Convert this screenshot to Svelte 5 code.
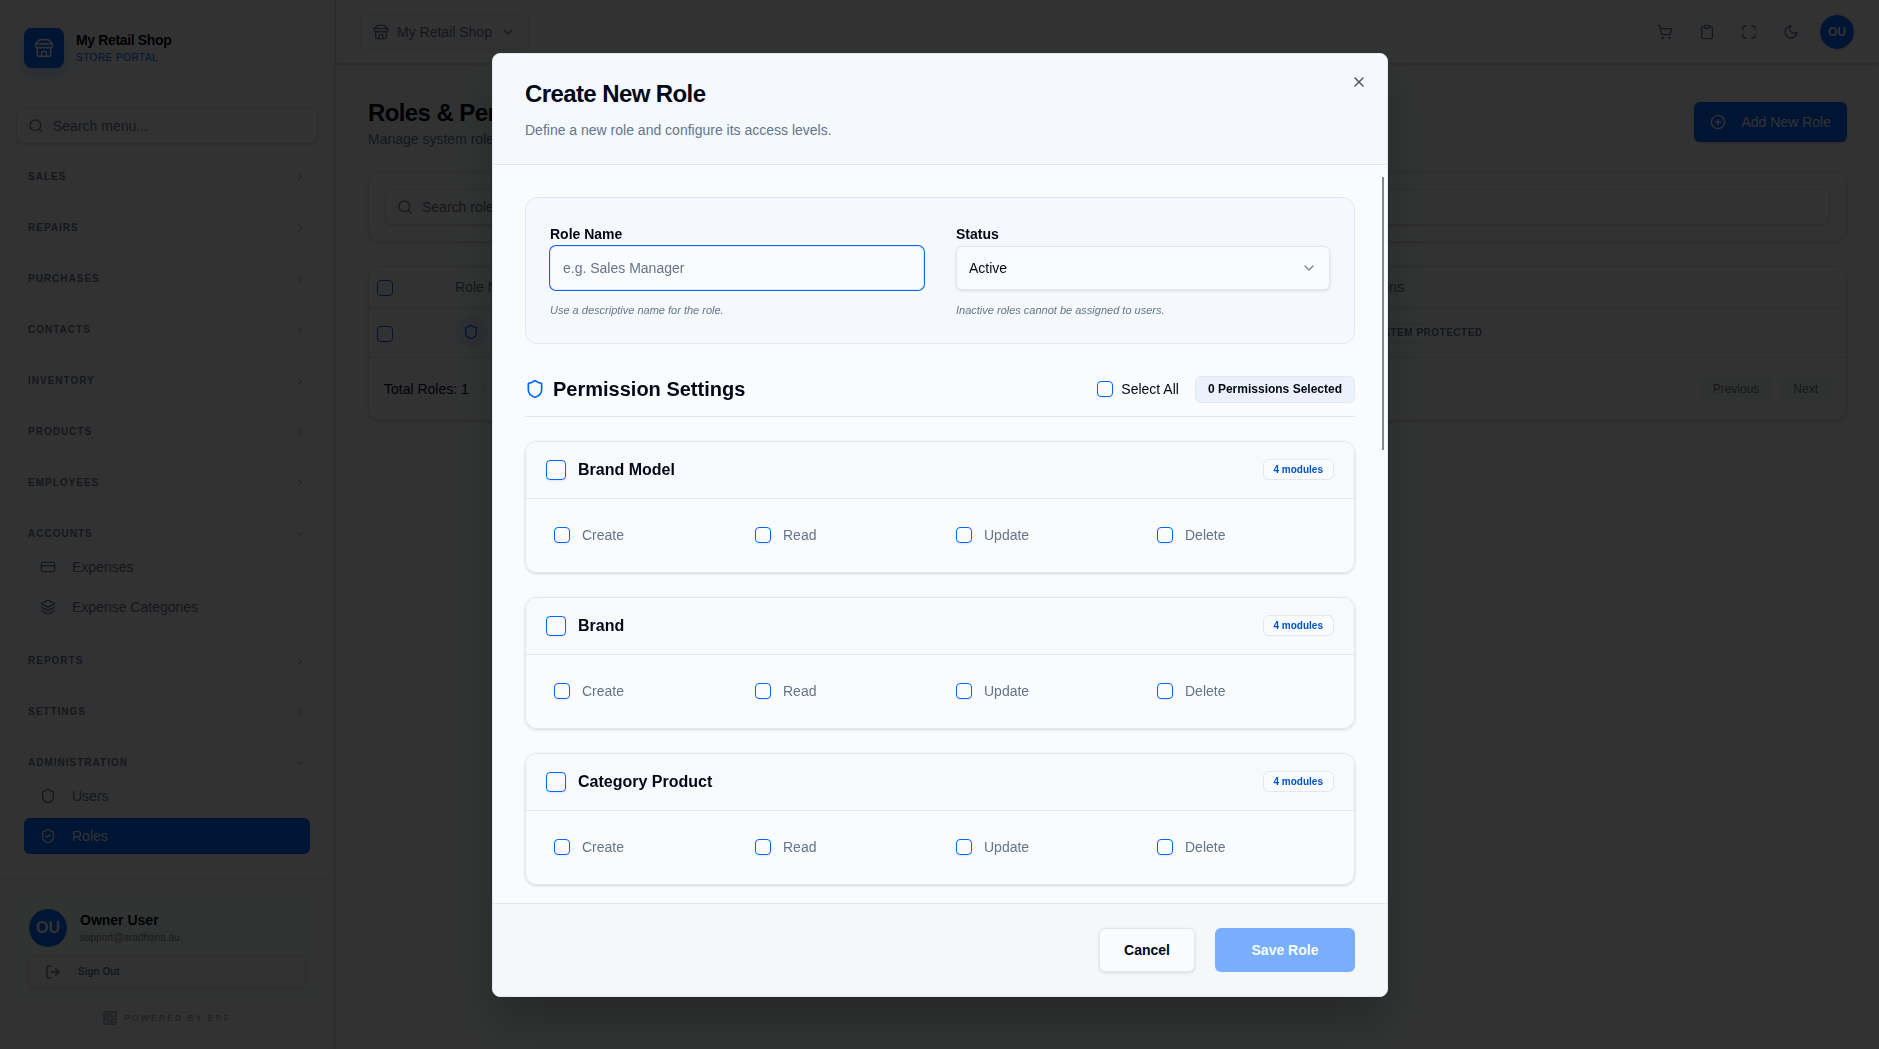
<script>
  const icons = {
    store: [
      'm2 7 4.41-4.41A2 2 0 0 1 7.83 2h8.34a2 2 0 0 1 1.42.59L22 7',
      'M4 12v8a2 2 0 0 0 2 2h12a2 2 0 0 0 2-2v-8',
      'M15 22v-4a2 2 0 0 0-2-2h-2a2 2 0 0 0-2 2v4',
      'M2 7h20',
      'M22 7v3a2 2 0 0 1-2 2 2.7 2.7 0 0 1-1.59-.63.7.7 0 0 0-.82 0A2.7 2.7 0 0 1 16 12a2.7 2.7 0 0 1-1.59-.63.7.7 0 0 0-.82 0A2.7 2.7 0 0 1 12 12a2.7 2.7 0 0 1-1.59-.63.7.7 0 0 0-.82 0A2.7 2.7 0 0 1 8 12a2.7 2.7 0 0 1-1.59-.63.7.7 0 0 0-.82 0A2.7 2.7 0 0 1 4 12a2 2 0 0 1-2-2V7'
    ],
    search: ['M19 11a8 8 0 1 1-16 0 8 8 0 0 1 16 0z', 'm21 21-4.3-4.3'],
    right: ['m9 18 6-6-6-6'],
    down: ['m6 9 6 6 6-6'],
    card: ['M4 5h16a2 2 0 0 1 2 2v10a2 2 0 0 1-2 2H4a2 2 0 0 1-2-2V7a2 2 0 0 1 2-2z', 'M2 10h20'],
    layers: [
      'M12.83 2.18a2 2 0 0 0-1.66 0L2.6 6.08a1 1 0 0 0 0 1.83l8.58 3.91a2 2 0 0 0 1.66 0l8.58-3.9a1 1 0 0 0 0-1.83Z',
      'm22 12.65-9.17 4.16a2 2 0 0 1-1.66 0L2 12.65',
      'm22 17.65-9.17 4.16a2 2 0 0 1-1.66 0L2 17.65'
    ],
    shield: [
      'M20 13c0 5-3.5 7.5-7.66 8.95a1 1 0 0 1-.67-.01C7.5 20.5 4 18 4 13V6a1 1 0 0 1 1-1c2 0 4.5-1.2 6.24-2.72a1.17 1.17 0 0 1 1.52 0C14.51 3.81 17 5 19 5a1 1 0 0 1 1 1z'
    ],
    shieldCheck: [
      'M20 13c0 5-3.5 7.5-7.66 8.95a1 1 0 0 1-.67-.01C7.5 20.5 4 18 4 13V6a1 1 0 0 1 1-1c2 0 4.5-1.2 6.24-2.72a1.17 1.17 0 0 1 1.52 0C14.51 3.81 17 5 19 5a1 1 0 0 1 1 1z',
      'm9 12 2 2 4-4'
    ],
    logout: ['M9 21H5a2 2 0 0 1-2-2V5a2 2 0 0 1 2-2h4', 'm16 17 5-5-5-5', 'M21 12H9'],
    cart: [
      'M9 21a1 1 0 1 1-2 0 1 1 0 0 1 2 0z',
      'M20 21a1 1 0 1 1-2 0 1 1 0 0 1 2 0z',
      'M2.05 2.05h2l2.66 12.42a2 2 0 0 0 2 1.58h9.78a2 2 0 0 0 1.95-1.57l1.65-7.43H5.12'
    ],
    clipboard: [
      'M9 2h6a1 1 0 0 1 1 1v2a1 1 0 0 1-1 1H9a1 1 0 0 1-1-1V3a1 1 0 0 1 1-1z',
      'M16 4h2a2 2 0 0 1 2 2v14a2 2 0 0 1-2 2H6a2 2 0 0 1-2-2V6a2 2 0 0 1 2-2h2'
    ],
    maximize: ['M8 3H5a2 2 0 0 0-2 2v3', 'M21 8V5a2 2 0 0 0-2-2h-3', 'M3 16v3a2 2 0 0 0 2 2h3', 'M16 21h3a2 2 0 0 0 2-2v-3'],
    moon: ['M12 3a6 6 0 0 0 9 9 9 9 0 1 1-9-9Z'],
    plus: ['M22 12a10 10 0 1 1-20 0 10 10 0 0 1 20 0z', 'M8 12h8', 'M12 8v8'],
    close: ['M18 6 6 18', 'm6 6 12 12']
  };

  const sections = [
    { name: 'Sales' },
    { name: 'Repairs' },
    { name: 'Purchases' },
    { name: 'Contacts' },
    { name: 'Inventory' },
    { name: 'Products' },
    { name: 'Employees' },
    {
      name: 'Accounts',
      items: [
        { name: 'Expenses', icon: 'card' },
        { name: 'Expense Categories', icon: 'layers' }
      ]
    },
    { name: 'Reports' },
    { name: 'Settings' },
    {
      name: 'Administration',
      items: [
        { name: 'Users', icon: 'shield' },
        { name: 'Roles', icon: 'shieldCheck', active: true }
      ]
    }
  ];

  const tools = [
    { label: 'Point of sale', icon: 'cart' },
    { label: 'Orders', icon: 'clipboard' },
    { label: 'Full screen', icon: 'maximize' },
    { label: 'Dark mode', icon: 'moon' }
  ];

  const actions = ['Create', 'Read', 'Update', 'Delete'];
  const groups = ['Brand Model', 'Brand', 'Category Product'];

  let open = $state(true);
  let roleName = $state('');
  let status = $state('Active');
  let picked = $state([]);

  let allKeys = groups.flatMap((g) => keysOf(g));
  let allPicked = $derived(picked.length === allKeys.length);

  function keysOf(group) {
    return actions.map((a) => group + ':' + a);
  }

  function groupPicked(group) {
    return keysOf(group).every((k) => picked.includes(k));
  }

  function toggleGroup(group) {
    const keys = keysOf(group);
    const rest = picked.filter((k) => !keys.includes(k));
    picked = groupPicked(group) ? rest : [...rest, ...keys];
  }

  function toggleAll() {
    picked = allPicked ? [] : [...allKeys];
  }
</script>

{#snippet icon(name, size = 16)}
  <svg width={size} height={size} viewBox="0 0 24 24" fill="none" stroke="currentColor" stroke-width="2" stroke-linecap="round" stroke-linejoin="round" aria-hidden="true">
    {#each icons[name] as d}
      <path {d} />
    {/each}
  </svg>
{/snippet}

<div class="app">
  <aside class="sidebar">
    <div class="brand">
      <div class="logo">{@render icon('store', 20)}</div>
      <div>
        <div class="brand-name">My Retail Shop</div>
        <div class="brand-sub">STORE PORTAL</div>
      </div>
    </div>

    <label class="search menu-search">
      {@render icon('search')}
      <input type="text" placeholder="Search menu..." aria-label="Search menu" />
    </label>

    <nav>
      {#each sections as section}
        <section>
          <button class="section-head">
            <span>{section.name}</span>
            {@render icon(section.items ? 'down' : 'right', 12)}
          </button>
          {#if section.items}
            <div class="section-items">
              {#each section.items as item}
                <a href="#{item.name}" class="nav-item" class:active={item.active}>
                  {@render icon(item.icon)}
                  {item.name}
                </a>
              {/each}
            </div>
          {/if}
        </section>
      {/each}
    </nav>

    <div class="side-foot">
      <div class="user-card">
        <div class="user">
          <div class="avatar large">OU</div>
          <div>
            <div class="user-name">Owner User</div>
            <div class="user-mail">support@aradhana.au</div>
          </div>
        </div>
        <button class="sign-out">{@render icon('logout')} Sign Out</button>
      </div>
      <div class="powered">
        <svg width="14" height="14" viewBox="0 0 14 14" fill="currentColor" aria-hidden="true">
          <path d="M0 0h6.500v4.200H2v.6h4.500v1.700H0V3h4.500v-.8H0z" />
          <path fill-rule="evenodd" d="M7.200 0H14v6.500H7.200zM9.500 2v2.700h2.300V2z" />
          <path fill-rule="evenodd" d="M0 7.300h6.500V14H0zM2.200 9.300V12h2.200V9.300z" />
          <path d="M7.200 7.300H14v1.700H9.500v.8H14v1.600H9.500v.8H14V14H7.200z" />
        </svg>
        POWERED BY ERF
      </div>
    </div>
  </aside>

  <div class="main">
    <header class="topbar">
      <button class="shop-picker">
        {@render icon('store')}
        <span>My Retail Shop</span>
        {@render icon('down')}
      </button>
      <div class="tools">
        {#each tools as tool}
          <button class="tool" aria-label={tool.label}>{@render icon(tool.icon)}</button>
        {/each}
        <button class="avatar">OU</button>
      </div>
    </header>

    <main>
      <div class="page-head">
        <div>
          <h1>Roles &amp; Permissions</h1>
          <p>Manage system roles and permissions</p>
        </div>
        <button class="add">{@render icon('plus')} Add New Role</button>
      </div>

      <div class="panel filter">
        <label class="search">
          {@render icon('search')}
          <input type="text" placeholder="Search roles..." aria-label="Search roles" />
        </label>
      </div>

      <div class="panel">
        <table>
          <thead>
            <tr>
              <th class="tick"><input type="checkbox" aria-label="Select all roles" /></th>
              <th>Role Name</th>
              <th class="actions">Actions</th>
            </tr>
          </thead>
          <tbody>
            <tr>
              <td class="tick"><input type="checkbox" aria-label="Select role" /></td>
              <td><div class="role-icon">{@render icon('shield')}</div></td>
              <td class="actions"><span class="protected">SYSTEM PROTECTED</span></td>
            </tr>
          </tbody>
        </table>
        <div class="pager">
          <span class="total">Total Roles: 1</span>
          <div class="pages">
            <button>Previous</button>
            <button>Next</button>
          </div>
        </div>
      </div>
    </main>
  </div>
</div>

{#if open}
  <div class="overlay">
    <div class="modal" role="dialog" aria-modal="true" aria-labelledby="modal-title">
      <div class="modal-head">
        <h2 id="modal-title">Create New Role</h2>
        <p>Define a new role and configure its access levels.</p>
        <button class="close" aria-label="Close" onclick={() => (open = false)}>{@render icon('close')}</button>
      </div>

      <div class="modal-mid">
        <div class="modal-body">
          <div class="fields">
            <div class="field">
              <label for="role-name">Role Name</label>
              <input id="role-name" class="control current" type="text" placeholder="e.g. Sales Manager" bind:value={roleName} />
              <p class="hint">Use a descriptive name for the role.</p>
            </div>
            <div class="field">
              <label for="status">Status</label>
              <div class="select">
                <select id="status" class="control" bind:value={status}>
                  <option>Active</option>
                  <option>Inactive</option>
                </select>
                {@render icon('down')}
              </div>
              <p class="hint">Inactive roles cannot be assigned to users.</p>
            </div>
          </div>

          <div class="perm-head">
            <h3>{@render icon('shield', 20)} Permission Settings</h3>
            <div class="perm-tools">
              <label class="select-all">
                <input type="checkbox" checked={allPicked} onchange={toggleAll} />
                Select All
              </label>
              <span class="count">{picked.length} Permissions Selected</span>
            </div>
          </div>

          <div class="groups">
            {#each groups as group}
              <div class="group">
                <div class="group-head">
                  <label>
                    <input class="big" type="checkbox" checked={groupPicked(group)} onchange={() => toggleGroup(group)} />
                    {group}
                  </label>
                  <span class="modules">{actions.length} modules</span>
                </div>
                <div class="group-body">
                  {#each actions as action}
                    <label>
                      <input type="checkbox" value="{group}:{action}" bind:group={picked} />
                      {action}
                    </label>
                  {/each}
                </div>
              </div>
            {/each}
          </div>
        </div>
        <div class="scroll-thumb"></div>
      </div>

      <div class="modal-foot">
        <button class="cancel" onclick={() => (open = false)}>Cancel</button>
        <button class="save" disabled={!roleName}>Save Role</button>
      </div>
    </div>
  </div>
{/if}

<style>
  :global(body) {
    font-family: "Liberation Sans", Arial, sans-serif;
    font-size: 14px;
    line-height: 20px;
    color: #020817;
    background: #fafbfc;
    overflow: hidden;
  }

  :global(*) {
    box-sizing: border-box;
  }

  button,
  input,
  select {
    font: inherit;
    color: inherit;
    margin: 0;
  }

  button {
    padding: 0;
    border: 0;
    background: none;
    cursor: pointer;
  }

  h1,
  h2,
  h3,
  p {
    margin: 0;
  }

  svg {
    flex: none;
    display: block;
  }

  input::placeholder {
    color: #64748b;
    opacity: 1;
  }

  input[type="checkbox"] {
    appearance: none;
    flex: none;
    display: block;
    width: 16px;
    height: 16px;
    border: 1px solid #0066ff;
    border-radius: 4px;
    box-shadow: 0 1px 2px rgba(0, 0, 0, 0.08);
  }

  input[type="checkbox"]:checked {
    background: #0066ff;
  }

  input[type="checkbox"].big {
    width: 20px;
    height: 20px;
  }

  .app {
    display: flex;
    gap: 1px;
    height: 100vh;
  }

  /* sidebar */
  .sidebar {
    display: flex;
    flex-direction: column;
    flex: none;
    width: 335px;
    border-right: 1px solid #dbe2e9;
    box-shadow: 1px 0 2px rgba(0, 0, 0, 0.15);
  }

  .brand {
    display: flex;
    align-items: center;
    gap: 12px;
    padding: 28px 24px 40px;
  }

  .logo {
    display: grid;
    place-items: center;
    width: 40px;
    height: 40px;
    border-radius: 8px;
    color: #f8fafc;
    background: #0066ff;
    box-shadow: 0 8px 14px rgba(0, 102, 255, 0.2);
  }

  .brand-name {
    font-weight: 700;
    letter-spacing: -0.025em;
  }

  .brand-sub {
    font-size: 10px;
    line-height: 16px;
    letter-spacing: 0.05em;
    color: #0066ff;
  }

  .search {
    display: flex;
    align-items: center;
    gap: 9px;
    height: 36px;
    padding: 0 11px;
    border: 1px solid #dbe2e9;
    border-radius: 6px;
    color: #64748b;
    box-shadow: 0 1px 2px rgba(0, 0, 0, 0.12);
  }

  .search input {
    flex: 1;
    min-width: 0;
    padding: 0;
    border: 0;
    outline: 0;
    background: none;
  }

  .menu-search {
    margin: 0 16px 17px;
  }

  nav {
    display: flex;
    flex-direction: column;
    flex: 1;
    gap: 20px;
    min-height: 0;
    padding: 0 24px;
    overflow: hidden;
  }

  .section-head {
    display: flex;
    align-items: center;
    justify-content: space-between;
    width: 100%;
    height: 31px;
    padding: 0 4px;
    font-size: 10px;
    font-weight: 700;
    letter-spacing: 0.1em;
    text-transform: uppercase;
    color: #64748b;
  }

  .section-head svg {
    opacity: 0.7;
  }

  .section-items {
    display: flex;
    flex-direction: column;
    gap: 4px;
  }

  .nav-item {
    display: flex;
    align-items: center;
    gap: 16px;
    height: 36px;
    padding: 0 16px;
    border-radius: 6px;
    color: #64748b;
    text-decoration: none;
  }

  .nav-item.active {
    color: #f8fafc;
    background: #0066ff;
  }

  .side-foot {
    padding: 17px 16px 15px;
    border-top: 1px solid #dbe2e9;
  }

  .user-card {
    display: flex;
    flex-direction: column;
    gap: 8px;
    padding: 12px;
    border-radius: 12px;
    background: #f6f7f9;
  }

  .user {
    display: flex;
    align-items: center;
    gap: 12px;
  }

  .avatar {
    display: grid;
    place-items: center;
    width: 36px;
    height: 36px;
    border: 1px solid #d6e4fa;
    border-radius: 50%;
    font-size: 12px;
    font-weight: 700;
    color: #f8fafc;
    background: #0066ff;
    background-clip: padding-box;
  }

  .avatar.large {
    width: 40px;
    height: 40px;
    font-size: 16px;
  }

  .user-name {
    font-weight: 700;
  }

  .user-mail {
    font-size: 10px;
    line-height: 16px;
    color: #7c899c;
  }

  .sign-out {
    display: flex;
    align-items: center;
    gap: 17px;
    height: 32px;
    padding: 0 16px;
    border: 1px solid #e2e6ea;
    border-radius: 6px;
    font-size: 10px;
    font-weight: 700;
    color: #64748b;
    background: #fafbfc;
    box-shadow: 0 1px 2px rgba(0, 0, 0, 0.1);
  }

  .powered {
    display: flex;
    align-items: center;
    justify-content: center;
    gap: 7px;
    padding: 8px 0 6px;
    font-size: 9px;
    font-weight: 700;
    letter-spacing: 0.2em;
    color: #a9b1b9;
  }

  /* page */
  .main {
    flex: 1;
    min-width: 0;
  }

  .topbar {
    display: flex;
    align-items: center;
    justify-content: space-between;
    height: 64px;
    padding: 0 24px;
    border-bottom: 1px solid #dbe2e9;
    box-shadow: 0 1px 2px rgba(0, 0, 0, 0.15);
  }

  .shop-picker {
    display: flex;
    align-items: center;
    gap: 8px;
    height: 36px;
    padding: 0 12px;
    border: 1px solid #e2e6ea;
    border-radius: 6px;
    color: #64748b;
  }

  .tools {
    display: flex;
    align-items: center;
    gap: 6px;
    color: #64748b;
  }

  .tool {
    display: grid;
    place-items: center;
    width: 36px;
    height: 36px;
  }

  .tools .avatar {
    margin-left: 4px;
  }

  main {
    display: flex;
    flex-direction: column;
    gap: 24px;
    padding: 32px;
  }

  .page-head {
    display: flex;
    align-items: center;
    justify-content: space-between;
    height: 52px;
  }

  h1 {
    font-size: 24px;
    line-height: 34px;
    letter-spacing: -0.025em;
  }

  .page-head p {
    line-height: 18px;
    color: #64748b;
  }

  .add {
    display: flex;
    align-items: center;
    gap: 16px;
    height: 40px;
    padding: 0 16px;
    border-radius: 6px;
    color: #f8fafc;
    background: #0066ff;
    box-shadow: 0 1px 3px rgba(0, 0, 0, 0.2);
  }

  .panel {
    border: 1px solid #dbe2e9;
    border-radius: 12px;
    box-shadow: 0 1px 3px rgba(0, 0, 0, 0.15);
  }

  .filter {
    padding: 16px;
  }

  table {
    width: 100%;
    border-collapse: collapse;
  }

  tr {
    border-bottom: 1px solid #dbe2e9;
  }

  th,
  td {
    padding: 0 8px;
    text-align: left;
    font-weight: 400;
    color: #64748b;
  }

  th {
    height: 40px;
  }

  td {
    height: 50px;
  }

  .tick {
    width: 78px;
    padding-top: 3px;
  }

  .actions {
    width: 496px;
  }

  .role-icon {
    display: grid;
    place-items: center;
    width: 32px;
    height: 32px;
    border-radius: 50%;
    color: #0066ff;
    background: #e6effc;
  }

  .protected {
    display: inline-block;
    padding: 0 10px;
    border: 1px solid #e2e8f0;
    border-radius: 6px;
    font-size: 10px;
    line-height: 18px;
    font-weight: 700;
    letter-spacing: 0.05em;
  }

  .pager {
    display: flex;
    align-items: center;
    justify-content: space-between;
    height: 62px;
    padding: 0 15px;
  }

  .total {
    padding-right: 14px;
    border-right: 1px solid #dbe2e9;
    line-height: 14px;
  }

  .pages {
    display: flex;
    gap: 8px;
  }

  .pages button {
    height: 32px;
    padding: 0 12px;
    border: 1px solid #eaefed;
    border-radius: 6px;
    font-size: 12px;
    color: #74787c;
    background: #f1f7f4;
  }

  /* dialog */
  .overlay {
    position: fixed;
    inset: 0;
    display: grid;
    place-items: center;
    padding: 1px 0 0 1px;
    background: rgba(0, 0, 0, 0.8);
  }

  .modal {
    display: flex;
    flex-direction: column;
    width: 100%;
    max-width: 896px;
    height: 90vh;
    border: 1px solid #e2e8f0;
    border-radius: 8px;
    overflow: hidden;
    background: #fafbfd;
    box-shadow: 0 25px 50px rgba(0, 0, 0, 0.25);
  }

  .modal-head {
    position: relative;
    padding: 24px 32px;
    border-bottom: 1px solid #dfe7ef;
    background: #f5f9fd;
  }

  h2 {
    margin-bottom: 10px;
    font-size: 24px;
    line-height: 32px;
    letter-spacing: -0.025em;
  }

  .modal-head p {
    color: #64748b;
  }

  .close {
    position: absolute;
    top: 20px;
    right: 20px;
    opacity: 0.7;
  }

  .modal-mid {
    position: relative;
    flex: 1;
    min-height: 0;
  }

  .modal-body {
    height: 100%;
    padding: 32px;
    overflow-y: auto;
    scrollbar-width: none;
  }

  .scroll-thumb {
    position: absolute;
    top: 12px;
    right: 3px;
    width: 2px;
    height: 37%;
    background: #868788;
  }

  .fields {
    display: grid;
    grid-template-columns: 1fr 1fr;
    gap: 32px;
    padding: 24px;
    border: 1px solid #e2e8f0;
    border-radius: 12px;
    background: #f5f9fd;
  }

  .field label {
    display: block;
    line-height: 24px;
    font-weight: 700;
  }

  .control {
    display: block;
    width: 100%;
    height: 44px;
    padding: 0 12px;
    border: 1px solid #e2e8f0;
    border-radius: 6px;
    outline: 0;
    appearance: none;
    background: #fafbfd;
    box-shadow: 0 1px 3px rgba(0, 0, 0, 0.12);
  }

  .control.current {
    box-shadow: 0 0 0 1px #0066ff;
  }

  .select {
    position: relative;
  }

  .select svg {
    position: absolute;
    top: 14px;
    right: 13px;
    opacity: 0.5;
    pointer-events: none;
  }

  .hint {
    margin-top: 12px;
    font-size: 11px;
    line-height: 17px;
    font-style: italic;
    color: #64748b;
  }

  .perm-head {
    display: flex;
    align-items: center;
    justify-content: space-between;
    margin: 32px 0 24px;
    padding-bottom: 13px;
    border-bottom: 1px solid #e2e8f0;
  }

  h3 {
    display: flex;
    align-items: center;
    gap: 8px;
    font-size: 20px;
    line-height: 27px;
  }

  h3 svg {
    color: #0066ff;
  }

  .perm-tools,
  .select-all {
    display: flex;
    align-items: center;
    gap: 8px;
  }

  .perm-tools {
    gap: 16px;
  }

  .count {
    padding: 0 12px;
    border: 1px solid #e2e8f0;
    border-radius: 6px;
    font-size: 12px;
    line-height: 25px;
    font-weight: 700;
    background: #ecf2fc;
  }

  .groups {
    display: flex;
    flex-direction: column;
    gap: 24px;
  }

  .group {
    border: 1px solid #e2e8f0;
    border-radius: 12px;
    overflow: hidden;
    box-shadow: 0 1px 3px rgba(0, 0, 0, 0.15);
  }

  .group-head {
    display: flex;
    align-items: center;
    justify-content: space-between;
    height: 57px;
    padding: 0 20px;
    border-bottom: 1px solid #e2e8f0;
    background: #f7f9fd;
  }

  .group-head label {
    display: flex;
    align-items: center;
    gap: 12px;
    font-size: 16px;
    font-weight: 700;
  }

  .modules {
    padding: 0 10px;
    border: 1px solid #e2e8f0;
    border-radius: 6px;
    font-size: 10px;
    line-height: 19px;
    font-weight: 700;
    color: #0052cc;
    background: #fafbfd;
  }

  .group-body {
    display: grid;
    grid-template-columns: repeat(4, 1fr);
    gap: 16px;
    padding: 20px;
  }

  .group-body label {
    display: flex;
    align-items: center;
    gap: 12px;
    height: 33px;
    padding: 0 8px;
    color: #64748b;
  }

  .modal-foot {
    display: flex;
    justify-content: flex-end;
    gap: 20px;
    padding: 24px 32px;
    border-top: 1px solid #dfe7ef;
    background: #f4f8fb;
  }

  .modal-foot button {
    height: 44px;
    padding: 0 24px;
    border-radius: 6px;
    font-weight: 700;
  }

  .modal-foot .cancel {
    border: 1px solid #e2e8f0;
    background: #fafbfd;
    box-shadow: 0 1px 3px rgba(0, 0, 0, 0.12);
  }

  .modal-foot .save {
    min-width: 140px;
    color: #fff;
    background: #0066ff;
  }

  .modal-foot .save:disabled {
    opacity: 0.5;
  }
</style>
